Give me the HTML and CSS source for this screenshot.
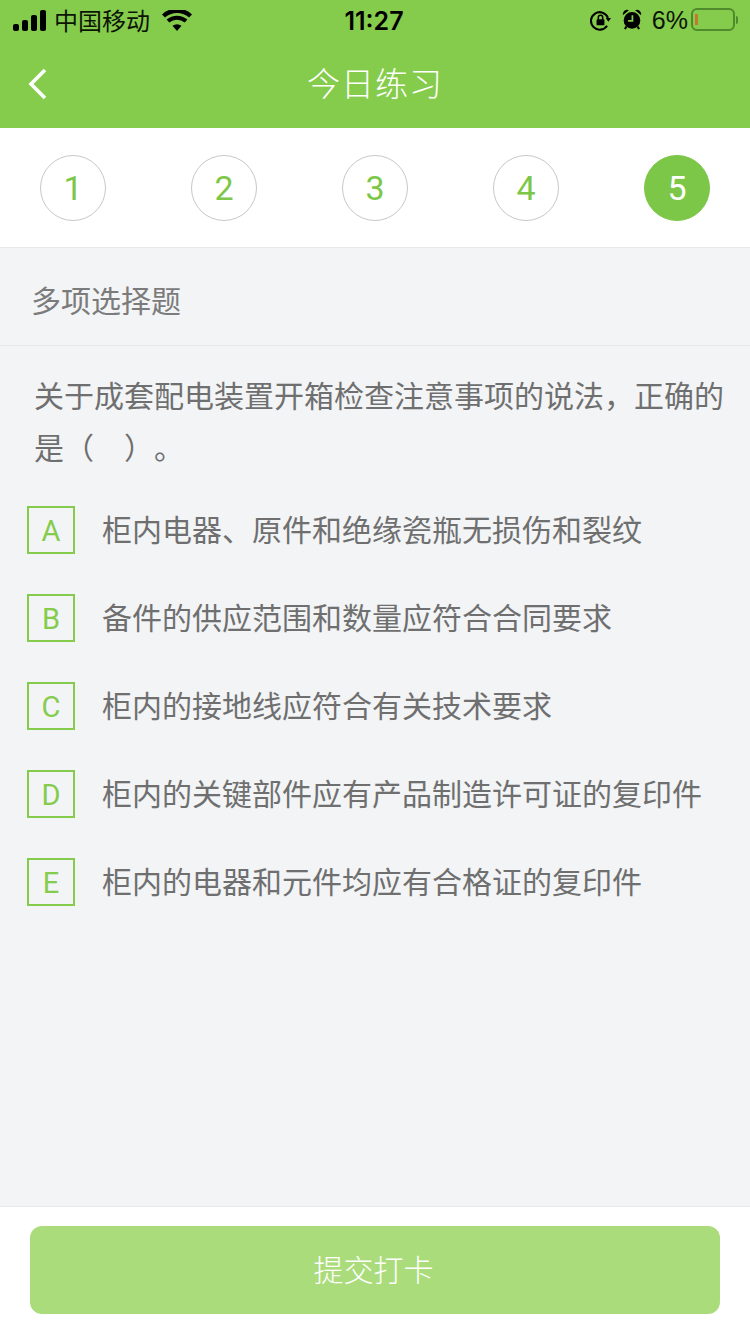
FILE: index.html
```html
<!DOCTYPE html>
<html lang="zh-CN">
<head>
<meta charset="utf-8">
<title>今日练习</title>
<link rel="stylesheet" href="styles.css">
</head>
<body>
<div class="page">
  <header class="head">
    <div class="status">
      <div class="st-left">
        <svg class="signal" width="33" height="21" viewBox="0 0 33 21"><rect x="0" y="14" width="6" height="7" rx="2"/><rect x="9" y="10" width="6" height="11" rx="2"/><rect x="18" y="5" width="6" height="16" rx="2"/><rect x="27" y="0" width="6" height="21" rx="2"/></svg>
        <span class="carrier">中国移动</span>
        <svg class="wifi" width="30" height="21" viewBox="0 0 30 21"><path d="M15 21 L10.500 15.800 A7 7 0 0 1 19.500 15.800 Z"/><path d="M7.300 12.600 L4.600 9.500 A16 16 0 0 1 25.400 9.500 L22.700 12.600 A12 12 0 0 0 7.300 12.600 Z"/><path d="M3 7.600 L0 4.500 A22 22 0 0 1 30 4.500 L27 7.600 A18 18 0 0 0 3 7.600 Z"/></svg>
      </div>
      <div class="time">11:27</div>
      <div class="st-right">
        <svg class="lock" width="21" height="21" viewBox="0 0 24 24"><path d="M20.500 9 A10 10 0 1 0 19.500 18" fill="none" stroke="#000" stroke-width="2.400"/><path d="M18 9 L24 9 L21 13.500 Z"/><rect x="7.500" y="10.500" width="9" height="7" rx="1"/><path d="M9.500 11 V8.500 A2.500 2.500 0 0 1 14.500 8.500 V11" fill="none" stroke="#000" stroke-width="1.800"/></svg>
        <svg class="alarm" width="20" height="21" viewBox="0 0 22 24"><circle cx="11" cy="13" r="9.500"/><path d="M0.500 7 A5 5 0 0 1 7.500 1.500 Z M21.500 7 A5 5 0 0 0 14.500 1.500 Z"/><path d="M4.500 20 L3 23 M17.500 20 L19 23" stroke="#000" stroke-width="2.400"/><path d="M11.500 7 V13.500 H6.500" fill="none" stroke="#86cc4c" stroke-width="2"/></svg>
        <span class="pct">6%</span>
        <div class="battery"><div class="batt-level"></div></div>
        <div class="batt-tip"></div>
      </div>
    </div>
    <div class="nav">
      <svg class="back" width="20" height="32" viewBox="0 0 20 32"><path d="M17 2 L3 16 L17 30" fill="none" stroke="#fff" stroke-width="3.600"/></svg>
      <h1 class="title">今日练习</h1>
    </div>
  </header>

  <nav class="steps">
    <div class="step">1</div>
    <div class="step">2</div>
    <div class="step">3</div>
    <div class="step">4</div>
    <div class="step step-on">5</div>
  </nav>

  <main class="body">
    <div class="qtype">多项选择题</div>
    <p class="question">关于成套配电装置开箱检查注意事项的说法，正确的是（　）。</p>
    <ul class="options">
      <li class="option"><span class="letter">A</span><span class="otext">柜内电器、原件和绝缘瓷瓶无损伤和裂纹</span></li>
      <li class="option"><span class="letter">B</span><span class="otext">备件的供应范围和数量应符合合同要求</span></li>
      <li class="option"><span class="letter">C</span><span class="otext">柜内的接地线应符合有关技术要求</span></li>
      <li class="option"><span class="letter">D</span><span class="otext">柜内的关键部件应有产品制造许可证的复印件</span></li>
      <li class="option"><span class="letter">E</span><span class="otext">柜内的电器和元件均应有合格证的复印件</span></li>
    </ul>
  </main>

  <footer class="foot">
    <button class="submit" type="button">提交打卡</button>
  </footer>
</div>
</body>
</html>
```

FILE: styles.css
```css
* { box-sizing: border-box; }
html, body { margin: 0; padding: 0; }
body {
  width: 750px;
  height: 1334px;
  overflow: hidden;
  font-family: "Noto Sans CJK SC", "Liberation Sans", sans-serif;
  background: #f2f4f6;
}
.page { display: flex; flex-direction: column; height: 1334px; }

.head { height: 128px; background: #86cc4c; flex: none; }
.status {
  height: 40px;
  display: flex;
  align-items: center;
  justify-content: space-between;
  position: relative;
  padding: 0 12px 0 13px;
  color: #000;
}
.st-left, .st-right { display: flex; align-items: center; }
.signal { fill: #000; margin-right: 8px; }
.carrier { font-size: 24px; line-height: 28px; color: #0c1406; }
.wifi { fill: #000; margin-left: 12px; }
.time {
  position: absolute;
  left: 0;
  right: 2px;
  top: 6px;
  text-align: center;
  font: 600 25px/30px Inter, "Liberation Sans", sans-serif;
}
.lock { fill: #000; margin-right: 11px; }
.alarm { fill: #000; margin-right: 10px; margin-bottom: 2px; }
.pct { font: 400 25px/30px "Liberation Sans", sans-serif; margin-right: 3px; color: #0c1406; }
.battery {
  width: 44px;
  height: 23px;
  border: 2px solid #4f8a2c;
  border-radius: 6px;
  padding: 4px 2px;
  margin-bottom: 1px;
}
.batt-level { width: 3px; height: 100%; background: #c4782e; }
.batt-tip { width: 2px; height: 8px; background: #4f8a2c; border-radius: 0 2px 2px 0; margin-left: 1px; }

.nav {
  height: 88px;
  position: relative;
  display: flex;
  align-items: center;
  justify-content: center;
}
.back { position: absolute; left: 28px; top: 0; bottom: 0; margin: auto 0; }
.title {
  margin: 0 0 3px;
  font-size: 33px;
  font-weight: 300;
  line-height: 44px;
  color: #fff;
  letter-spacing: 1px;
  transform: translateY(-1px);
}

.steps {
  height: 120px;
  flex: none;
  background: #fff;
  border-bottom: 1px solid #e6e8ea;
  padding: 0 40px;
  display: flex;
  align-items: center;
  justify-content: space-between;
}
.step {
  width: 66px;
  height: 66px;
  border: 1px solid #c8c8c8;
  border-radius: 50%;
  display: flex;
  align-items: center;
  justify-content: center;
  font: 400 34px/1 Roboto, "Liberation Sans", sans-serif;
  color: #7dc748;
  padding-top: 1px;
}
.step-on { background: #7dc748; border-color: #7dc748; color: #fff; }

.body { flex: 1; min-height: 0; }
.qtype {
  height: 98px;
  border-bottom: 1px solid #e6e8ea;
  padding: 4px 0 0 31px;
  display: flex;
  align-items: center;
  font-size: 30px;
  font-weight: 400;
  color: #7b7b7b;
}
.question {
  margin: 0;
  padding: 22px 20px 0 34px;
  font-size: 30px;
  font-weight: 400;
  line-height: 52px;
  color: #6f6f6f;
  text-spacing-trim: space-all;
}
.options { list-style: none; margin: 34px 0 0; padding: 0 0 0 27px; }
.option { display: flex; align-items: center; height: 48px; margin-bottom: 40px; }
.letter {
  width: 48px;
  height: 48px;
  flex: none;
  border: 2px solid #86cc4c;
  display: flex;
  align-items: center;
  justify-content: center;
  font: 400 29px/1 Roboto, "Liberation Sans", sans-serif;
  color: #86cc4c;
  padding-top: 2px;
}
.otext {
  margin-left: 27px;
  font-size: 30px;
  font-weight: 400;
  line-height: 44px;
  color: #6f6f6f;
  margin-bottom: 4px;
}

.foot {
  height: 128px;
  flex: none;
  background: #fff;
  border-top: 1px solid #e8eaec;
  padding: 19px 30px 0;
}
.submit {
  display: block;
  width: 690px;
  height: 88px;
  border: 0;
  border-radius: 12px;
  background: #abdc7b;
  color: #fff;
  font-family: inherit;
  font-size: 30px;
  font-weight: 300;
  padding: 0 3px 4px 0;
}
```
